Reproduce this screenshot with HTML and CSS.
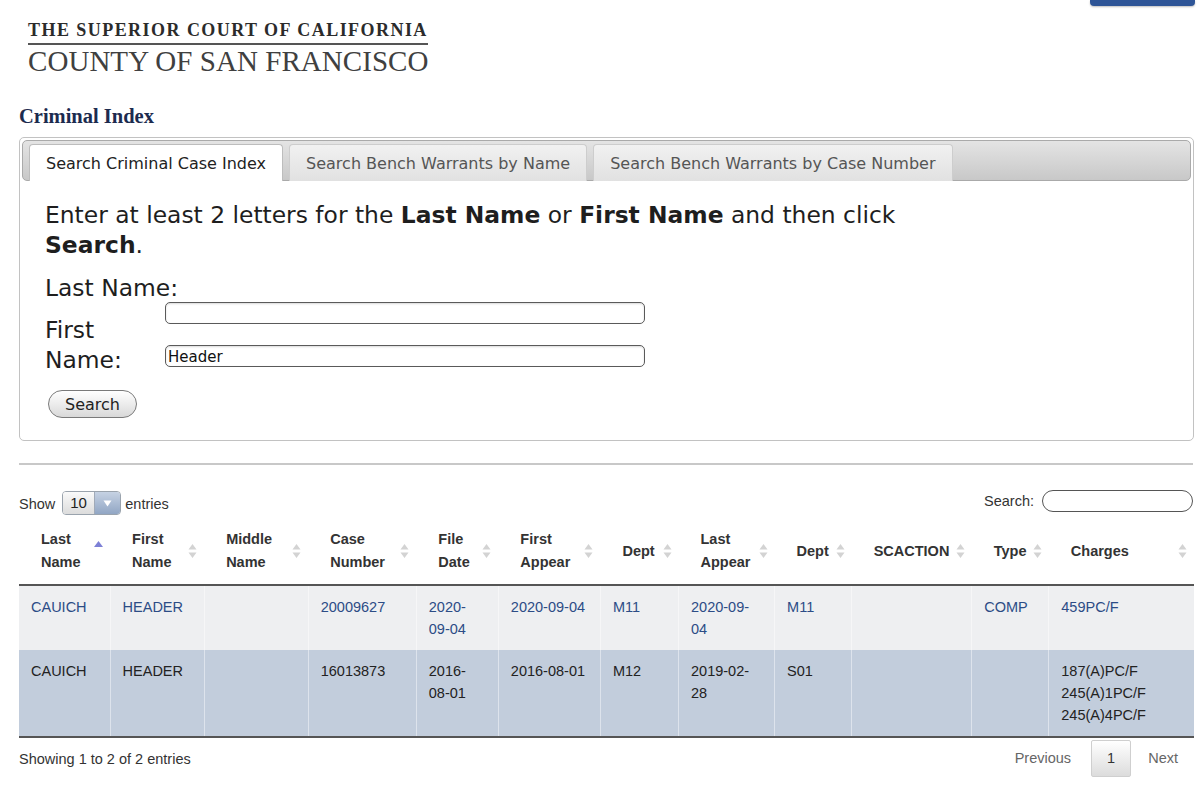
FILE: index.html
```html
<!DOCTYPE html>
<html>
<head>
<meta charset="utf-8">
<title>Criminal Index</title>
<link rel="stylesheet" href="styles.css">
</head>
<body>
<div class="page">
  <header class="site-head">
    <div class="logo">
      <div class="logo-top">THE SUPERIOR COURT OF CALIFORNIA</div>
      <div class="logo-bottom">COUNTY OF SAN FRANCISCO</div>
    </div>
    <span class="top-btn"></span>
  </header>

  <h1 class="title">Criminal Index</h1>

  <div class="tabs">
    <ul class="tab-bar">
      <li class="tab active">Search Criminal Case Index</li>
      <li class="tab">Search Bench Warrants by Name</li>
      <li class="tab">Search Bench Warrants by Case Number</li>
    </ul>
    <div class="tab-panel">
      <p class="intro">Enter at least 2 letters for the <b>Last Name</b> or <b>First Name</b> and then click <b>Search</b>.</p>
      <div class="lbl-last">Last Name:</div>
      <div class="name-grid">
        <label class="lbl-first">First Name:</label>
        <div class="inputs">
          <input class="txt" type="text" value="">
          <input class="txt" type="text" value="Header">
        </div>
      </div>
      <button class="btn-search">Search</button>
    </div>
  </div>

  <hr class="sep">

  <div class="controls">
    <div class="show">
      <span>Show</span>
      <span class="select"><span class="val">10</span><span class="arr"><svg width="9" height="7" viewBox="0 0 9 7"><path d="M0.5 0.5 L8.5 0.5 L4.5 6.5 Z" fill="#fff"/></svg></span></span>
      <span>entries</span>
    </div>
    <div class="filter">
      <span>Search:</span>
      <input class="filter-input" type="text">
    </div>
  </div>

  <table class="grid">
    <colgroup>
      <col class="c1"><col class="c2"><col class="c3"><col class="c4"><col class="c5"><col class="c6">
      <col class="c7"><col class="c8"><col class="c9"><col class="c10"><col class="c11"><col class="c12">
    </colgroup>
    <thead>
      <tr>
        <th class="first-th"><div class="th-in"><span>Last Name</span><svg class="sort" viewBox="0 0 9 18"><path d="M0 8 L4.5 2 L9 8 Z" fill="#7d80d6"/></svg></div></th>
        <th><div class="th-in"><span>First Name</span><svg class="sort" viewBox="0 0 9 18"><path d="M0.5 7.5 L4.5 2 L8.5 7.5 Z M0.5 10.5 L4.5 16 L8.5 10.5 Z" fill="#d3d3d3"/></svg></div></th>
        <th><div class="th-in"><span>Middle Name</span><svg class="sort" viewBox="0 0 9 18"><path d="M0.5 7.5 L4.5 2 L8.5 7.5 Z M0.5 10.5 L4.5 16 L8.5 10.5 Z" fill="#d3d3d3"/></svg></div></th>
        <th><div class="th-in"><span>Case Number</span><svg class="sort" viewBox="0 0 9 18"><path d="M0.5 7.5 L4.5 2 L8.5 7.5 Z M0.5 10.5 L4.5 16 L8.5 10.5 Z" fill="#d3d3d3"/></svg></div></th>
        <th><div class="th-in"><span>File Date</span><svg class="sort" viewBox="0 0 9 18"><path d="M0.5 7.5 L4.5 2 L8.5 7.5 Z M0.5 10.5 L4.5 16 L8.5 10.5 Z" fill="#d3d3d3"/></svg></div></th>
        <th><div class="th-in"><span>First Appear</span><svg class="sort" viewBox="0 0 9 18"><path d="M0.5 7.5 L4.5 2 L8.5 7.5 Z M0.5 10.5 L4.5 16 L8.5 10.5 Z" fill="#d3d3d3"/></svg></div></th>
        <th><div class="th-in"><span>Dept</span><svg class="sort" viewBox="0 0 9 18"><path d="M0.5 7.5 L4.5 2 L8.5 7.5 Z M0.5 10.5 L4.5 16 L8.5 10.5 Z" fill="#d3d3d3"/></svg></div></th>
        <th><div class="th-in"><span>Last Appear</span><svg class="sort" viewBox="0 0 9 18"><path d="M0.5 7.5 L4.5 2 L8.5 7.5 Z M0.5 10.5 L4.5 16 L8.5 10.5 Z" fill="#d3d3d3"/></svg></div></th>
        <th><div class="th-in"><span>Dept</span><svg class="sort" viewBox="0 0 9 18"><path d="M0.5 7.5 L4.5 2 L8.5 7.5 Z M0.5 10.5 L4.5 16 L8.5 10.5 Z" fill="#d3d3d3"/></svg></div></th>
        <th><div class="th-in"><span>SCACTION</span><svg class="sort" viewBox="0 0 9 18"><path d="M0.5 7.5 L4.5 2 L8.5 7.5 Z M0.5 10.5 L4.5 16 L8.5 10.5 Z" fill="#d3d3d3"/></svg></div></th>
        <th><div class="th-in"><span>Type</span><svg class="sort" viewBox="0 0 9 18"><path d="M0.5 7.5 L4.5 2 L8.5 7.5 Z M0.5 10.5 L4.5 16 L8.5 10.5 Z" fill="#d3d3d3"/></svg></div></th>
        <th><div class="th-in"><span>Charges</span><svg class="sort" viewBox="0 0 9 18"><path d="M0.5 7.5 L4.5 2 L8.5 7.5 Z M0.5 10.5 L4.5 16 L8.5 10.5 Z" fill="#d3d3d3"/></svg></div></th>
      </tr>
    </thead>
    <tbody>
      <tr class="odd">
        <td>CAUICH</td>
        <td>HEADER</td>
        <td></td>
        <td>20009627</td>
        <td>2020-09-04</td>
        <td>2020-09-04</td>
        <td>M11</td>
        <td>2020-09-04</td>
        <td>M11</td>
        <td></td>
        <td>COMP</td>
        <td>459PC/F</td>
      </tr>
      <tr class="even">
        <td>CAUICH</td>
        <td>HEADER</td>
        <td></td>
        <td>16013873</td>
        <td>2016-08-01</td>
        <td>2016-08-01</td>
        <td>M12</td>
        <td>2019-02-28</td>
        <td>S01</td>
        <td></td>
        <td></td>
        <td>187(A)PC/F<br>245(A)1PC/F<br>245(A)4PC/F</td>
      </tr>
    </tbody>
  </table>

  <div class="foot">
    <div class="info">Showing 1 to 2 of 2 entries</div>
    <div class="pager">
      <span class="pg">Previous</span><span class="pg current">1</span><span class="pg">Next</span>
    </div>
  </div>
</div>
</body>
</html>
```

FILE: styles.css
```css
* { box-sizing: border-box; }

body {
  margin: 0;
  font-family: "Liberation Sans", Arial, sans-serif;
  color: #333;
  background: #fff;
}

.page {
  margin: 0 6px 0 19px;
}

/* header */
.site-head {
  display: flex;
  justify-content: space-between;
  align-items: flex-start;
}

.logo {
  margin: 21px 0 0 9px;
  width: 400px;
}

.logo-top {
  font-family: "Liberation Serif", "Times New Roman", serif;
  font-weight: bold;
  font-size: 18px;
  line-height: 18px;
  letter-spacing: 1.45px;
  white-space: nowrap;
  color: #2b2b2b;
  padding-bottom: 4px;
  border-bottom: 2px solid #555;
}

.logo-bottom {
  font-family: "Liberation Serif", "Times New Roman", serif;
  font-size: 29px;
  line-height: 29px;
  letter-spacing: 0.05px;
  margin-top: 2px;
  white-space: nowrap;
  color: #404040;
}

.top-btn {
  display: block;
  width: 105px;
  height: 6px;
  margin-right: -1px;
  background: #2e5597;
  border-radius: 0 0 4px 4px;
  box-shadow: 0 1px 2px rgba(0, 0, 0, 0.25);
}

.title {
  font-family: "Liberation Serif", "Times New Roman", serif;
  font-weight: bold;
  font-size: 20.5px;
  line-height: 24px;
  color: #1c2b4f;
  margin: 28px 0 9px;
}

/* tabs */
.tabs {
  border: 1px solid #c2c2c2;
  border-radius: 5px;
  padding: 2px;
}

.tab-bar {
  list-style: none;
  margin: 0;
  padding: 3px 6px 0;
  height: 41px;
  display: flex;
  gap: 6px;
  background: linear-gradient(#e4e4e4, #c8c8c8);
  border: 1px solid #aaa;
  border-radius: 5px;
}

.tab {
  height: 37px;
  padding: 0 16px;
  display: flex;
  align-items: center;
  font-family: "DejaVu Sans", Verdana, sans-serif;
  font-size: 16px;
  color: #555;
  background: linear-gradient(#f1f1f1, #e1e1e1);
  border: 1px solid #cdcdcd;
  border-bottom: 0;
  border-radius: 4px 4px 0 0;
}

.tab.active {
  background: #fff;
  color: #222;
  border-color: #bdbdbd;
}

.tab-panel {
  padding: 19px 23px 20px;
  font-family: "DejaVu Sans", Verdana, sans-serif;
  color: #1e1e1e;
}

.intro {
  margin: 0;
  font-size: 23.4px;
  line-height: 30px;
  max-width: 900px;
}

.lbl-last {
  font-size: 23.4px;
  line-height: 30px;
  margin-top: 13px;
}

.name-grid {
  display: grid;
  grid-template-columns: 120px 480px;
  margin-top: -1px;
}

.lbl-first {
  font-size: 23.4px;
  line-height: 30px;
  margin-top: 13px;
}

.inputs {
  display: flex;
  flex-direction: column;
  gap: 21px;
}

.txt {
  width: 480px;
  height: 22px;
  border: 1px solid #5a5a5a;
  border-radius: 5px;
  font-family: "DejaVu Sans", Verdana, sans-serif;
  font-size: 15px;
  padding: 2px 2px 0;
  color: #111;
  box-shadow: inset 0 1px 2px rgba(0, 0, 0, 0.15);
}

.btn-search {
  display: block;
  margin: 15px 0 0 3px;
  width: 89px;
  height: 28px;
  padding: 1px 0 0;
  border: 1px solid #7a7a7a;
  border-radius: 14px;
  background: linear-gradient(#fff, #d9d9d9);
  font-family: "DejaVu Sans", Verdana, sans-serif;
  font-size: 16px;
  color: #222;
}

.sep {
  margin: 22px 1px 0 0;
  height: 0;
  border: 0;
  border-top: 2px solid #c8c8c8;
}

/* table controls */
.controls {
  display: flex;
  justify-content: space-between;
  align-items: center;
  margin-top: 26px;
  height: 24px;
  font-size: 14.5px;
  color: #333;
}

.show {
  display: flex;
  align-items: center;
}

.show > span:first-child,
.show > span:last-child {
  padding-top: 2px;
}

.select {
  display: flex;
  width: 59px;
  height: 24px;
  margin: 0 4px 0 7px;
  border: 1px solid #9aa3ad;
  border-radius: 4px;
  overflow: hidden;
}

.select .val {
  flex: 1;
  background: linear-gradient(#fafafa, #dcdcdc);
  font-size: 15px;
  line-height: 22px;
  padding-left: 7px;
  color: #222;
}

.select .arr {
  width: 26px;
  display: flex;
  align-items: center;
  justify-content: center;
  background: linear-gradient(#c6d2e3, #91a6c4);
  border-left: 1px solid #a0aab8;
}

.filter {
  display: flex;
  align-items: center;
  margin-top: -5px;
}

.filter-input {
  width: 151px;
  height: 22px;
  margin-left: 8px;
  margin-right: 1px;
  border: 1px solid #555;
  border-radius: 11px;
}

/* data table */
.grid {
  width: 100%;
  margin-top: 8px;
  border-collapse: collapse;
  table-layout: fixed;
  font-size: 14.5px;
}

.c1 { width: 91px; }
.c2 { width: 94px; }
.c3 { width: 104px; }
.c4 { width: 108px; }
.c5 { width: 82px; }
.c6 { width: 102px; }
.c7 { width: 78px; }
.c8 { width: 96px; }
.c9 { width: 77px; }
.c10 { width: 120px; }
.c11 { width: 77px; }
.c12 { width: 145px; }

.grid th {
  padding: 5px 7px 10px 22px;
  text-align: left;
  font-weight: bold;
  line-height: 23px;
  color: #333;
  border-bottom: 2px solid #555;
  vertical-align: middle;
}

.th-in {
  display: flex;
  align-items: center;
  justify-content: space-between;
  gap: 4px;
}

.sort {
  width: 9px;
  height: 18px;
  flex: none;
}

.first-th .sort {
  margin-top: -6px;
}

.grid td {
  padding: 10px 12px;
  line-height: 22px;
  vertical-align: top;
  border-left: 1px solid rgba(255, 255, 255, 0.45);
}

.grid td:first-child {
  border-left: 0;
}

.grid tr.odd td {
  background: #eeeff1;
  color: #2c4c86;
}

.grid tr.even td {
  background: #c2cddc;
  color: #222;
  border-bottom: 2px solid #555;
}

/* footer */
.foot {
  display: flex;
  justify-content: space-between;
  align-items: center;
  padding-top: 2px;
  font-size: 14.5px;
  color: #333;
}

.pager {
  display: flex;
  margin-right: 1px;
}

.pg {
  padding: 9px 14px;
  line-height: 17px;
  margin-left: 2px;
  border: 1px solid transparent;
  border-radius: 2px;
  color: #666;
}

.pg:first-child {
  padding-left: 17px;
  padding-right: 17px;
}

.pg.current {
  padding: 9px 15px;
  border-color: #cfcfcf;
  background: linear-gradient(#fff, #dcdcdc);
  color: #333;
}
```
